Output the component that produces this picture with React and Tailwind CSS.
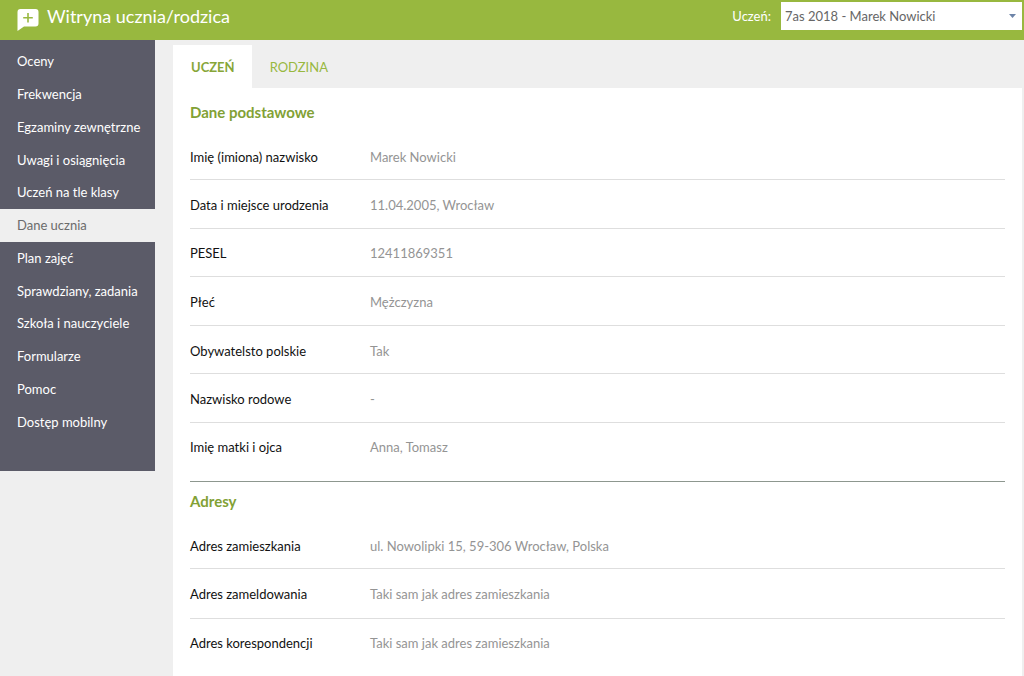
const navItems = [
  'Oceny',
  'Frekwencja',
  'Egzaminy zewnętrzne',
  'Uwagi i osiągnięcia',
  'Uczeń na tle klasy',
  'Dane ucznia',
  'Plan zajęć',
  'Sprawdziany, zadania',
  'Szkoła i nauczyciele',
  'Formularze',
  'Pomoc',
  'Dostęp mobilny',
];

const basicData = [
  ['Imię (imiona) nazwisko', 'Marek Nowicki'],
  ['Data i miejsce urodzenia', '11.04.2005, Wrocław'],
  ['PESEL', '12411869351'],
  ['Płeć', 'Mężczyzna'],
  ['Obywatelsto polskie', 'Tak'],
  ['Nazwisko rodowe', '-'],
  ['Imię matki i ojca', 'Anna, Tomasz'],
];

const addresses = [
  ['Adres zamieszkania', 'ul. Nowolipki 15, 59-306 Wrocław, Polska'],
  ['Adres zameldowania', 'Taki sam jak adres zamieszkania'],
  ['Adres korespondencji', 'Taki sam jak adres zamieszkania'],
];

const Logo = () => (
  <svg className="w-[22px] h-[22px]" viewBox="0 0 22 22" aria-hidden="true">
    <path d="M3.5 0h15A3 3 0 0 1 21.500 3v11.500a3 3 0 0 1-3 3H7L.5 22V3a3 3 0 0 1 3-3Z" fill="#fff" />
    <path d="M11 4v9.500M6.200 8.800h9.600" stroke="#98b83f" strokeWidth="1.600" />
  </svg>
);

const Header = () => (
  <header className="h-10 bg-[#98b83f] text-white flex justify-between pl-[17px] pr-[2px]">
    <div className="flex items-start gap-2 pt-[9px]">
      <Logo />
      <h1 className="text-[18px] leading-[14px]">Witryna ucznia/rodzica</h1>
    </div>
    <div className="flex items-start pt-[2px]">
      <label htmlFor="student" className="leading-7 mr-[10px]">Uczeń:</label>
      <div className="relative">
        <select
          id="student"
          className="appearance-none block w-[241px] h-7 pl-1 pr-6 bg-white text-[#666]"
        >
          <option>7as 2018 - Marek Nowicki</option>
        </select>
        <svg className="absolute right-[6px] top-3 w-[7px] h-1 pointer-events-none" viewBox="0 0 7 4" aria-hidden="true">
          <path d="M0 0h7L3.500 4Z" fill="#6d84a8" />
        </svg>
      </div>
    </div>
  </header>
);

const Sidebar = () => (
  <nav className="w-[155px] shrink-0 bg-[#5b5b68] pt-[5px] pb-[33px]">
    <ul className="grid grid-rows-12 h-[393px]">
      {navItems.map((item) => (
        <li key={item} className="grid">
          <a
            href="#"
            className={
              item === 'Dane ucznia'
                ? 'flex items-center pl-[17px] bg-[#efefef] text-[#6b6b6b]'
                : 'flex items-center pl-[17px] text-white'
            }
          >
            {item}
          </a>
        </li>
      ))}
    </ul>
  </nav>
);

const DataTable = ({ rows, className }) => (
  <table className={`w-full ${className}`}>
    <tbody>
      {rows.map(([label, value]) => (
        <tr key={label} className="border-b border-[#dedede] last:border-b-0">
          <th scope="row" className="w-[180px] pt-[2px] text-left font-normal text-[#111]">{label}</th>
          <td className="pt-[2px] text-[#949494]">{value}</td>
        </tr>
      ))}
    </tbody>
  </table>
);

const App = () => (
  <div className="min-h-screen flex flex-col bg-[#efefef] font-['Lato',sans-serif] text-[13px] leading-5">
    <Header />
    <div className="flex flex-1 items-start">
      <Sidebar />
      <main className="flex-1 self-stretch flex flex-col pl-[18px] pr-[2px] pt-[5px]">
        <div role="tablist" className="flex h-[43px]">
          <button role="tab" aria-selected="true" className="pl-[18px] pr-[17px] bg-white font-bold text-[#87a638]">
            UCZEŃ
          </button>
          <button role="tab" aria-selected="false" className="pl-[18px] pr-[17px] text-[#98b83f]">
            RODZINA
          </button>
        </div>
        <div className="flex-1 bg-white px-[17px] pt-[14px] pb-2">
          <section>
            <h2 className="text-[15px] font-bold text-[#82a135] mb-[10px]">Dane podstawowe</h2>
            <DataTable rows={basicData} className="h-[338px]" />
          </section>
          <section className="mt-[11px] border-t border-[#8d978f] pt-[9px]">
            <h2 className="text-[15px] font-bold text-[#82a135] mb-[10px]">Adresy</h2>
            <DataTable rows={addresses} className="h-[145px]" />
          </section>
        </div>
      </main>
    </div>
  </div>
);

export default App;
